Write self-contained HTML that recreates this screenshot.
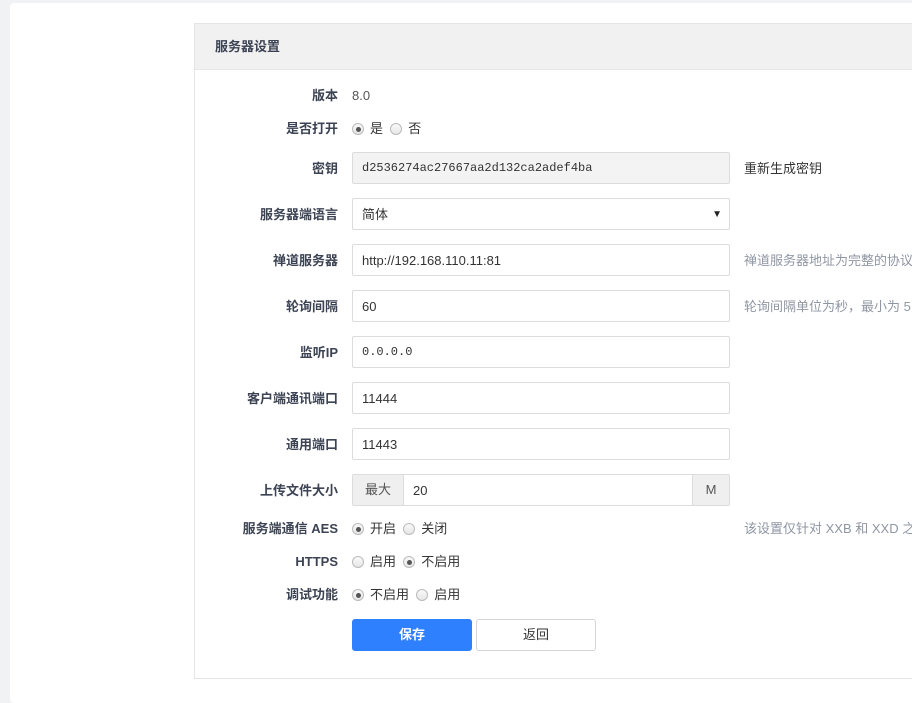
<!DOCTYPE html>
<html><head><meta charset="utf-8"><style>
*{box-sizing:border-box;margin:0;padding:0}
body{width:912px;height:686px;background:#f1f2f4;font-family:"Liberation Sans","Noto Sans CJK SC",sans-serif;font-size:13px;line-height:16px;color:#333;position:relative;overflow:hidden}
.card{position:absolute;left:10px;top:3px;width:920px;height:700px;background:#fff;border-radius:4px}
.panel{position:absolute;left:194px;top:23px;width:730px;height:656px;border:1px solid #e5e5e5;background:#fff}
.hd{position:absolute;left:0;top:0;right:0;height:46px;background:#f1f1f1;border-bottom:1px solid #e8e8e8;font-weight:bold;font-size:13px;color:#3c4353;padding-left:20px;line-height:45px}
.lbl{position:absolute;right:574px;font-weight:bold;color:#3c4353;white-space:nowrap}
.a{position:absolute;white-space:nowrap}
.inp{position:absolute;left:352px;width:378px;height:32px;border:1px solid #dcdcdc;border-radius:2px;background:#fff;padding:0 9px;line-height:31px;color:#333}
.mono{font-family:"Liberation Mono",monospace;font-size:12px}
.r{display:inline-block;width:12px;height:12px;border:1px solid #bbb;border-radius:50%;background:linear-gradient(#fafafa,#e6e6e6);vertical-align:-2px;margin-right:6px;position:relative}
.r.on::after{content:"";position:absolute;left:2.5px;top:2.5px;width:5px;height:5px;border-radius:50%;background:#555}
.hint{position:absolute;left:744px;color:#8f96a3;white-space:nowrap}
.btn{position:absolute;top:619px;height:32px;width:120px;border-radius:3px;text-align:center;line-height:30px}
</style></head><body>
<div class="card"></div>
<div class="panel"><div class="hd">服务器设置</div></div>

<div class="lbl" style="top:88px">版本</div><div class="a" style="left:352px;top:88px;color:#555">8.0</div>
<div class="lbl" style="top:121px">是否打开</div><div class="a" style="left:352px;top:121px"><span class="r on"></span>是&nbsp;&nbsp;<span class="r"></span>否</div>

<div class="lbl" style="top:161px">密钥</div><div class="inp mono" style="top:152px;background:#f3f3f3">d2536274ac27667aa2d132ca2adef4ba</div><div class="a" style="left:744px;top:161px">重新生成密钥</div>
<div class="lbl" style="top:207px">服务器端语言</div><div class="inp" style="top:198px">简体<span style="position:absolute;right:7px;top:0;font-size:10px;color:#222">▼</span></div>
<div class="lbl" style="top:253px">禅道服务器</div><div class="inp" style="top:244px">http://192.168.110.11:81</div><div class="hint" style="top:253px">禅道服务器地址为完整的协议</div>
<div class="lbl" style="top:299px">轮询间隔</div><div class="inp" style="top:290px">60</div><div class="hint" style="top:299px">轮询间隔单位为秒，最小为 5</div>
<div class="lbl" style="top:345px">监听IP</div><div class="inp mono" style="top:336px">0.0.0.0</div>
<div class="lbl" style="top:391px">客户端通讯端口</div><div class="inp" style="top:382px">11444</div>
<div class="lbl" style="top:437px">通用端口</div><div class="inp" style="top:428px">11443</div>
<div class="lbl" style="top:483px">上传文件大小</div>
<div class="inp" style="top:474px;padding:0 0 0 60px">20
<div style="position:absolute;left:0;top:0;width:51px;height:30px;background:#efefef;border-right:1px solid #dcdcdc;text-align:center;line-height:30px;color:#555">最大</div>
<div style="position:absolute;right:0;top:0;width:37px;height:30px;background:#efefef;border-left:1px solid #dcdcdc;text-align:center;line-height:30px;color:#555">M</div></div>

<div class="lbl" style="top:521px">服务端通信 AES</div><div class="a" style="left:352px;top:521px"><span class="r on"></span>开启&nbsp;&nbsp;<span class="r"></span>关闭</div><div class="hint" style="top:521px">该设置仅针对 XXB 和 XXD 之</div>
<div class="lbl" style="top:554px">HTTPS</div><div class="a" style="left:352px;top:554px"><span class="r"></span>启用&nbsp;&nbsp;<span class="r on"></span>不启用</div>
<div class="lbl" style="top:587px">调试功能</div><div class="a" style="left:352px;top:587px"><span class="r on"></span>不启用&nbsp;&nbsp;<span class="r"></span>启用</div>

<div class="btn" style="left:352px;background:#2f80ff;color:#fff;font-weight:bold;border:1px solid #2f80ff">保存</div>
<div class="btn" style="left:476px;background:#fff;border:1px solid #d5d5d5;color:#333">返回</div>
</body></html>
